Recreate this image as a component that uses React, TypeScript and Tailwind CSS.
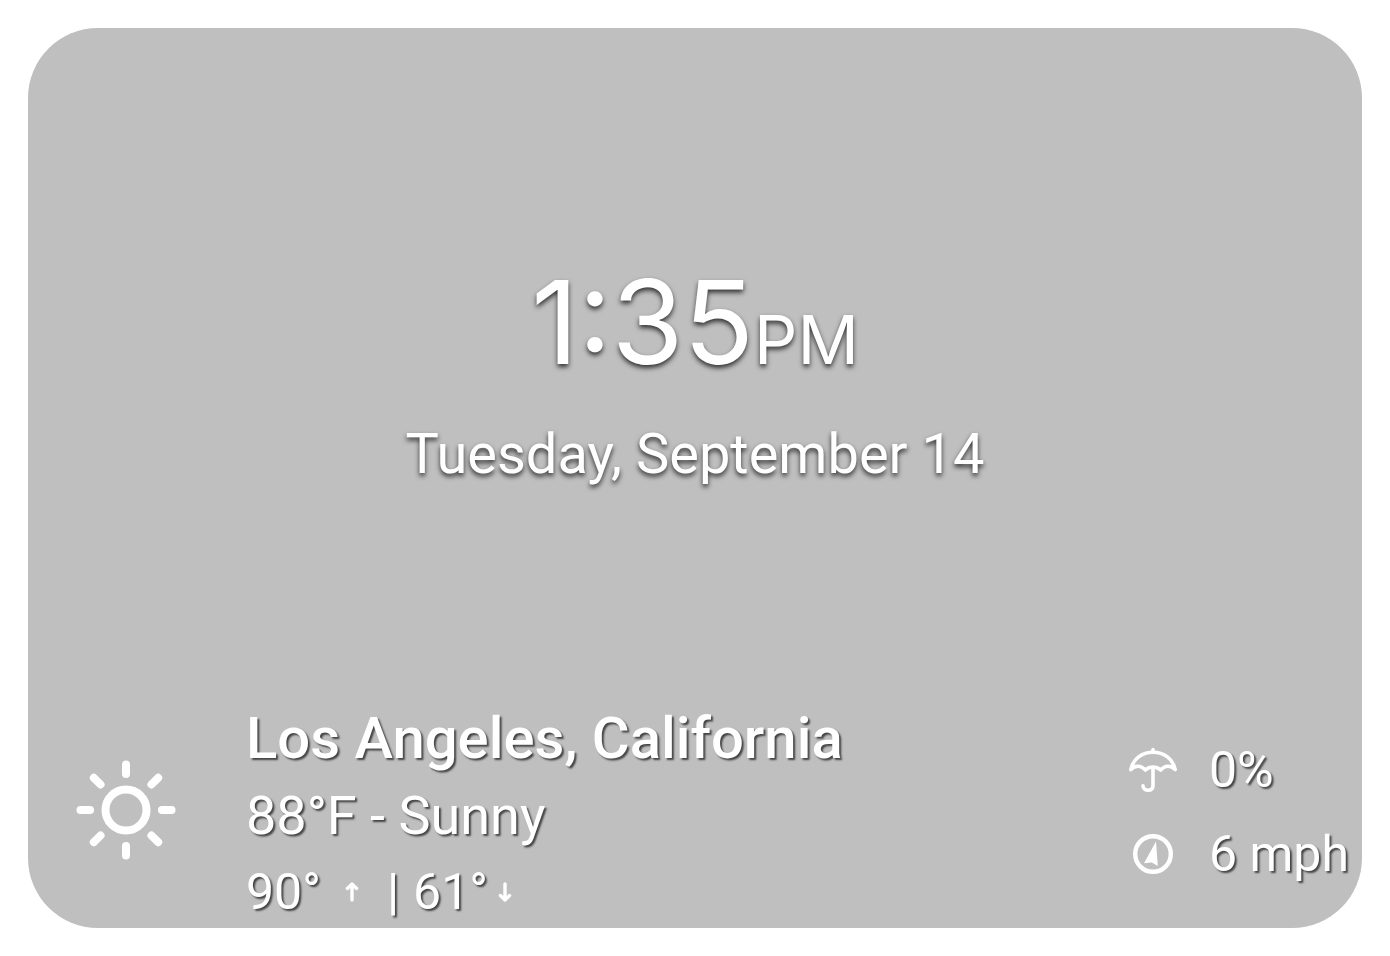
import type { ReactNode } from "react";

function SunIcon() {
  return (
    <svg
      viewBox="0 0 100 100"
      className="size-[100px] shrink-0"
      fill="none"
      stroke="currentColor"
      strokeWidth="8"
      strokeLinecap="round"
      role="img"
      aria-label="Sunny"
    >
      <circle cx="50" cy="50" r="20.5" />
      {[0, 45, 90, 135, 180, 225, 270, 315].map((angle) => (
        <path key={angle} d="M50 4.5V14" transform={`rotate(${angle} 50 50)`} />
      ))}
    </svg>
  );
}

function UmbrellaIcon() {
  return (
    <svg
      viewBox="0 0 48 48"
      className="size-12 shrink-0"
      fill="none"
      stroke="currentColor"
      strokeWidth="3.6"
      strokeLinecap="round"
      strokeLinejoin="round"
      role="img"
      aria-label="Chance of rain"
    >
      <path d="M24 3.6V6" />
      <path d="M1.8 23.6C4 13 13 6.2 24 6.2S44 13 46.2 23.6C41.5 18.8 36 19.4 31.6 24C27.4 20 20.6 20 16.4 24C12 19.4 6.5 18.8 1.8 23.6Z" />
      <path d="M24 21.5V39.5C24 42.6 22 44.3 19.2 44.3S14 42.6 14 39.8" />
    </svg>
  );
}

function WindIcon() {
  return (
    <svg viewBox="0 0 48 48" className="size-12 shrink-0" role="img" aria-label="Wind">
      <circle cx="24" cy="24" r="17.8" fill="none" stroke="currentColor" strokeWidth="4.4" />
      <path d="M27 11.5L28.800 36L22.800 32.600L15 33.200Z" fill="currentColor" />
    </svg>
  );
}

function ArrowIcon({ down = false }: { down?: boolean }) {
  return (
    <svg
      viewBox="0 0 14 20"
      className="h-5 w-3.5 shrink-0"
      fill="none"
      stroke="currentColor"
      strokeWidth="3.4"
      strokeLinecap="round"
      strokeLinejoin="round"
      role="img"
      aria-label={down ? "Low" : "High"}
    >
      <path d={down ? "M7 2V18M2.4 13.6L7 18L11.6 13.6" : "M7 18V2M2.4 6.4L7 2L11.6 6.4"} />
    </svg>
  );
}

function Reading({ icon, children }: { icon: ReactNode; children: ReactNode }) {
  return (
    <div className="flex h-[84px] items-center gap-8">
      {icon}
      <span className="w-[153px] text-[50px] whitespace-nowrap">{children}</span>
    </div>
  );
}

export default function App() {
  return (
    <div className="flex min-h-screen bg-white p-7 font-['Roboto',sans-serif] text-white">
      <main className="flex flex-1 flex-col overflow-hidden rounded-[70px] bg-[#bfbfbf]">
        <section className="flex flex-1 flex-col items-center justify-center gap-9 pt-4 [text-shadow:0_3px_5px_rgba(0,0,0,0.75)]">
          <time className="font-['Inter',sans-serif] text-[116px] leading-[128px]">
            1:35<span className="text-[68px] leading-none">PM</span>
          </time>
          <p className="text-[56px] leading-[64px]">Tuesday, September 14</p>
        </section>

        <footer className="flex items-center justify-between pl-12 [text-shadow:2px_2px_2px_rgba(0,0,0,0.65)]">
          <div className="flex items-center gap-[70px]">
            <div className="pb-2">
              <SunIcon />
            </div>
            <div>
              <h1 className="text-[58px] leading-[76px] font-medium">Los Angeles, California</h1>
              <p className="text-[54px] leading-[80px]">88°F - Sunny</p>
              <div className="flex items-center text-[50px] leading-[72px]">
                <span>90°</span>
                <span className="pr-7 pl-6">
                  <ArrowIcon />
                </span>
                <span>|</span>
                <span className="pl-3.5">61°</span>
                <span className="pl-2.5">
                  <ArrowIcon down />
                </span>
              </div>
            </div>
          </div>
          <div className="pb-1">
            <Reading icon={<UmbrellaIcon />}>0%</Reading>
            <Reading icon={<WindIcon />}>6 mph</Reading>
          </div>
        </footer>
      </main>
    </div>
  );
}
